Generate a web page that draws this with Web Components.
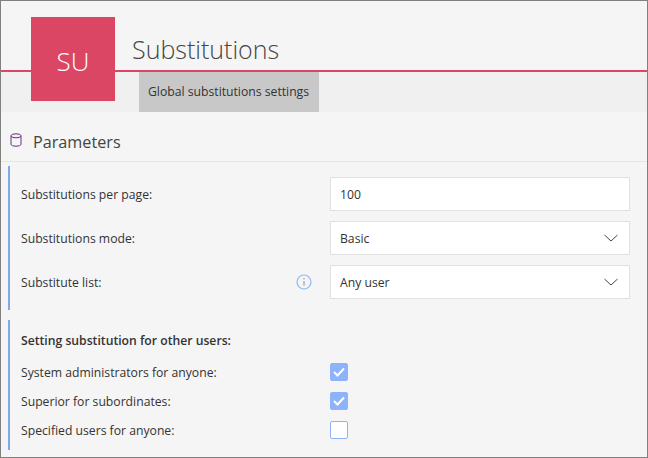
<!DOCTYPE html>
<html>
<head>
<meta charset="utf-8">
<title>Substitutions</title>
<style>
  html, body { margin: 0; padding: 0; }
  body {
    width: 648px;
    height: 458px;
    overflow: hidden;
    font-family: "Open Sans", "Noto Sans", sans-serif;
  }
</style>
</head>
<body>
<app-window>
  <page-header initials="SU" heading="Substitutions" tab="Global substitutions settings"></page-header>
  <section-title>Parameters</section-title>
  <field-group style="margin-top: 4px; height: 144px; padding-top: 11px;">
    <field-row label="Substitutions per page:"><text-box>100</text-box></field-row>
    <field-row label="Substitutions mode:"><select-box>Basic</select-box></field-row>
    <field-row label="Substitute list:" info><select-box>Any user</select-box></field-row>
  </field-group>
  <field-group style="margin-top: 10px; height: 130px; padding-top: 11px;">
    <group-heading>Setting substitution for other users:</group-heading>
    <check-row label="System administrators for anyone:" checked></check-row>
    <check-row label="Superior for subordinates:" checked></check-row>
    <check-row label="Specified users for anyone:"></check-row>
  </field-group>
</app-window>

<script>
class AppWindow extends HTMLElement {
  constructor () {
    super()
    this.attachShadow({ mode: 'open' }).innerHTML = `
      <style>
        :host {
          display: block;
          box-sizing: border-box;
          width: 648px;
          height: 458px;
          background: #f5f5f5;
          border: 1px solid #808080;
          color: #333;
          overflow: hidden;
        }
      </style>
      <slot></slot>
    `
  }
}

class PageHeader extends HTMLElement {
  constructor () {
    super()
    this.attachShadow({ mode: 'open' })
  }

  connectedCallback () {
    this.shadowRoot.innerHTML = `
      <style>
        :host { display: block; position: relative; }
        .top { height: 69px; padding-left: 131px; box-sizing: border-box; }
        h1 {
          margin: 0;
          padding-top: 32px;
          font-size: 25px;
          line-height: 32px;
          font-weight: 300;
          color: #444;
        }
        .rule { height: 2px; background: #da4663; }
        .band { height: 40px; background: #f0f0f0; padding-left: 138px; }
        .tab {
          display: inline-block;
          height: 40px;
          width: 180px;
          box-sizing: border-box;
          padding-left: 9px;
          background: #c8c8c8;
          font-size: 12.2px;
          line-height: 40px;
          color: #333;
          white-space: nowrap;
        }
        .logo {
          position: absolute;
          left: 30px;
          top: 16px;
          width: 84px;
          height: 84px;
          background: #da4663;
          color: #fff;
          font-size: 26px;
          font-weight: 300;
          line-height: 88px;
          text-align: center;
        }
      </style>
      <div class="top"><h1>${this.getAttribute('heading')}</h1></div>
      <div class="rule"></div>
      <div class="band"><div class="tab">${this.getAttribute('tab')}</div></div>
      <div class="logo">${this.getAttribute('initials')}</div>
    `
  }
}

class SectionTitle extends HTMLElement {
  constructor () {
    super()
    this.attachShadow({ mode: 'open' }).innerHTML = `
      <style>
        :host {
          display: flex;
          align-items: center;
          height: 50px;
          padding: 11px 0 0 9px;
          box-sizing: border-box;
          border-bottom: 1px solid #e6e6e6;
          font-size: 16.200px;
          color: #444;
        }
        svg { margin: -5px 11px 0 0; }
      </style>
      <svg width="12" height="14" viewBox="0 0 12 14" fill="none" stroke="#6d2f80" stroke-width="1">
        <ellipse cx="6" cy="2.800" rx="5" ry="2"/>
        <path d="M1 2.800v8.400c0 1.100 2.200 2 5 2s5-.9 5-2V2.800"/>
      </svg>
      <slot></slot>
    `
  }
}

class FieldGroup extends HTMLElement {
  constructor () {
    super()
    this.attachShadow({ mode: 'open' }).innerHTML = `
      <style>
        :host {
          display: flex;
          flex-direction: column;
          box-sizing: border-box;
          margin-left: 7px;
          padding-left: 11px;
          border-left: 2px solid #7faae6;
        }
      </style>
      <slot></slot>
    `
  }
}

class FieldRow extends HTMLElement {
  constructor () {
    super()
    this.attachShadow({ mode: 'open' })
  }

  connectedCallback () {
    const info = this.hasAttribute('info') ? `
      <svg class="info" width="16" height="16" viewBox="0 0 16 16" fill="none">
        <circle cx="8" cy="8" r="7" stroke="#8fb8f8" stroke-width="1.200"/>
        <path d="M8 7v4.500" stroke="#7a8aa8" stroke-width="1"/>
        <circle cx="8" cy="4.800" r=".7" fill="#7a8aa8"/>
      </svg>` : ''
    this.shadowRoot.innerHTML = `
      <style>
        :host {
          display: flex;
          align-items: center;
          height: 34px;
          margin-bottom: 10px;
          padding-right: 17px;
          font-size: 12.2px;
          color: #333;
        }
        .label { flex: 1; }
        .info { margin: 0 18px 1px 0; }
      </style>
      <span class="label">${this.getAttribute('label')}</span>
      ${info}
      <slot></slot>
    `
  }
}

const BOX_CSS = `
  :host {
    display: flex;
    align-items: center;
    justify-content: space-between;
    width: 300px;
    height: 34px;
    box-sizing: border-box;
    padding: 0 11px 0 9px;
    background: #fff;
    border: 1px solid #e0e0e0;
    font-size: 12.2px;
    color: #333;
  }
`

class TextBox extends HTMLElement {
  constructor () {
    super()
    this.attachShadow({ mode: 'open' }).innerHTML = `
      <style>${BOX_CSS}</style>
      <slot></slot>
    `
  }
}

class SelectBox extends HTMLElement {
  constructor () {
    super()
    this.attachShadow({ mode: 'open' }).innerHTML = `
      <style>${BOX_CSS}</style>
      <slot></slot>
      <svg width="14" height="8" viewBox="0 0 14 8" fill="none" stroke="#444" stroke-width="1">
        <path d="M.5 1 7 7l6.500-6"/>
      </svg>
    `
  }
}

class GroupHeading extends HTMLElement {
  constructor () {
    super()
    this.attachShadow({ mode: 'open' }).innerHTML = `
      <style>
        :host {
          display: block;
          height: 32px;
          margin-top: 1px;
          font-size: 12.2px;
          font-weight: 600;
          line-height: 18px;
          color: #333;
        }
      </style>
      <slot></slot>
    `
  }
}

class CheckRow extends HTMLElement {
  constructor () {
    super()
    this.attachShadow({ mode: 'open' })
  }

  connectedCallback () {
    const tick = this.hasAttribute('checked')
      ? '<svg width="12" height="10" viewBox="0 0 12 10" fill="none" stroke="#fff" stroke-width="2"><path d="M1 5l3.500 3.500L11 1.500"/></svg>'
      : ''
    this.shadowRoot.innerHTML = `
      <style>
        :host {
          display: flex;
          align-items: center;
          justify-content: space-between;
          width: 327px;
          height: 18px;
          margin-bottom: 11px;
          font-size: 12.2px;
          color: #333;
        }
        .box {
          display: flex;
          align-items: center;
          justify-content: center;
          width: 18px;
          height: 18px;
          box-sizing: border-box;
          border-radius: 2px;
          border: 1px solid #8db4fb;
          background: ${tick ? '#8db4fb' : '#fff'};
        }
      </style>
      <span>${this.getAttribute('label')}</span>
      <span class="box">${tick}</span>
    `
  }
}

customElements.define('app-window', AppWindow)
customElements.define('page-header', PageHeader)
customElements.define('section-title', SectionTitle)
customElements.define('field-group', FieldGroup)
customElements.define('field-row', FieldRow)
customElements.define('text-box', TextBox)
customElements.define('select-box', SelectBox)
customElements.define('group-heading', GroupHeading)
customElements.define('check-row', CheckRow)
</script>
</body>
</html>
